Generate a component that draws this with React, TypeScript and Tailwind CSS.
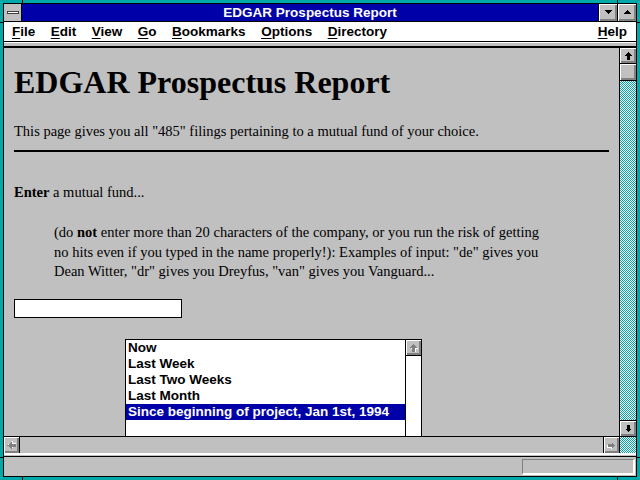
import React from 'react';

// Win 3.1 bevel for small gray buttons
const bevel = 'bg-[#c0c0c0] shadow-[inset_1px_1px_#fff,inset_-1px_-1px_#808080,inset_-2px_-2px_#808080]';
const dither = 'bg-[conic-gradient(#00a8a8_25%,#fff_0_50%,#00a8a8_0_75%,#fff_0)] bg-[length:2px_2px]';

// Thick pixel arrow pointing up; rotate for other directions
function Arrow({ dir = 0, gray }: { dir?: number; gray?: boolean }) {
  const pts = '3.5,0 7,4 5,4 5,8 2,8 2,4 0,4';
  return (
    <svg width="9" height="9" viewBox="-1 -0.5 9 9" shapeRendering="crispEdges" style={{ transform: `rotate(${dir}deg)` }}>
      {gray && <polygon points={pts} fill="#fff" transform="translate(1 1)" />}
      <polygon points={pts} fill={gray ? '#808080' : '#000'} />
    </svg>
  );
}

function Triangle({ up }: { up?: boolean }) {
  return (
    <svg width="8" height="5" viewBox="0 0 8 5" shapeRendering="crispEdges">
      <polygon points={up ? '4,0 8,4 0,4' : '0,0 8,0 4,4'} fill="#000" />
    </svg>
  );
}

function MenuItem({ k, rest }: { k: string; rest: string }) {
  return (
    <span>
      <span className="underline underline-offset-2">{k}</span>
      {rest}
    </span>
  );
}

export default function App() {
  const ranges = ['Now', 'Last Week', 'Last Two Weeks', 'Last Month', 'Since beginning of project, Jan 1st, 1994'];

  return (
    <div className="relative w-[640px] h-[480px] bg-[#00a8a8] p-[3px] font-['Liberation_Sans',Arial,sans-serif] text-[13.5px] font-bold">
      {/* resize-frame notches */}
      <div className="absolute left-[22px] top-0 w-px h-[3px] bg-black" />
      <div className="absolute left-[617px] top-0 w-px h-[3px] bg-black" />
      <div className="absolute left-[22px] bottom-0 w-px h-[3px] bg-black" />
      <div className="absolute left-[617px] bottom-0 w-px h-[3px] bg-black" />
      <div className="absolute left-0 top-[22px] w-[3px] h-px bg-black" />
      <div className="absolute right-0 top-[22px] w-[3px] h-px bg-black" />
      <div className="absolute left-0 top-[457px] w-[3px] h-px bg-black" />
      <div className="absolute right-0 top-[457px] w-[3px] h-px bg-black" />

      <div className="h-full flex flex-col border border-black bg-[#c0c0c0]">
        {/* Title bar */}
        <div className="h-[18px] shrink-0 flex border-b border-black bg-[#0000a8]">
          <div className="w-[18px] border-r border-black bg-[#c0c0c0] flex items-center justify-center">
            <div className="w-[12px] h-[3px] bg-white border border-[#404040]" />
          </div>
          <div className="flex-1 text-center text-white leading-[17px]">EDGAR Prospectus Report</div>
          <div className={`w-[19px] border-l border-black flex items-center justify-center ${bevel}`}>
            <Triangle />
          </div>
          <div className={`w-[19px] border-l border-black flex items-center justify-center ${bevel}`}>
            <Triangle up />
          </div>
        </div>

        {/* Menu bar */}
        <div className="h-[20px] shrink-0 flex items-center gap-[15.5px] pl-[8px] pr-[9px] bg-white border-b border-black leading-[19px] text-black">
          <MenuItem k="F" rest="ile" />
          <MenuItem k="E" rest="dit" />
          <MenuItem k="V" rest="iew" />
          <MenuItem k="G" rest="o" />
          <MenuItem k="B" rest="ookmarks" />
          <MenuItem k="O" rest="ptions" />
          <MenuItem k="D" rest="irectory" />
          <span className="ml-auto">
            <MenuItem k="H" rest="elp" />
          </span>
        </div>

        {/* Toolbar edge */}
        <div className="h-[6px] shrink-0 border-t border-white border-b-2 border-b-black bg-[#c0c0c0]" />

        {/* Document + vertical scrollbar */}
        <div className="flex-1 flex min-h-0">
          <div className="flex-1 overflow-hidden pl-[10px] pr-[10px] font-['Liberation_Serif','Times_New_Roman',serif] font-normal text-[14.5px] leading-[19px] text-black">
            <h1 className="mt-[18px] text-[32px] leading-[32px] font-bold">EDGAR Prospectus Report</h1>
            <p className="mt-[24px]">This page gives you all "485" filings pertaining to a mutual fund of your choice.</p>
            <hr className="mt-[9px] border-t-2 border-black" />
            <p className="mt-[31px]">
              <b>Enter</b> a mutual fund...
            </p>
            <blockquote className="mt-[21px] ml-[40px] mr-[64px] leading-[19.5px]">
              (do <b>not</b> enter more than 20 characters of the company, or you run the risk of getting no hits even if you
              typed in the name properly!): Examples of input: "de" gives you Dean Witter, "dr" gives you Dreyfus, "van" gives
              you Vanguard...
            </blockquote>
            <div className="mt-[17px] w-[168px] h-[19px] bg-white border border-black" />
            <div className="mt-[21px] ml-[111px] w-[297px] h-[120px] flex bg-white border border-black font-['Liberation_Sans',Arial,sans-serif] font-bold text-[13.5px] leading-[16px]">
              <div className="flex-1">
                {ranges.map((r, i) => (
                  <div key={r} className={`h-[16px] pl-[2px] whitespace-nowrap ${i === 4 ? 'bg-[#0000a8] text-white' : ''}`}>
                    {r}
                  </div>
                ))}
              </div>
              <div className="w-[16px] border-l border-black">
                <div className={`h-[16px] border-b border-black flex items-center justify-center ${bevel}`}>
                  <Arrow gray />
                </div>
              </div>
            </div>
          </div>

          <div className="w-[17px] flex flex-col border-l border-black">
            <div className={`h-[16px] border-b border-black flex items-center justify-center ${bevel}`}>
              <Arrow />
            </div>
            <div className={`h-[17px] border-b border-black ${bevel}`} />
            <div className={`flex-1 ${dither}`} />
            <div className={`h-[16px] border-t border-black flex items-center justify-center ${bevel}`}>
              <Arrow dir={180} />
            </div>
          </div>
        </div>

        {/* Horizontal scrollbar */}
        <div className="h-[17px] shrink-0 flex border-t border-black">
          <div className={`w-[16px] border-r border-black flex items-center justify-center ${bevel}`}>
            <Arrow dir={-90} gray />
          </div>
          <div className="flex-1 bg-[#c0c0c0]" />
          <div className={`w-[16px] border-l border-black flex items-center justify-center ${bevel}`}>
            <Arrow dir={90} gray />
          </div>
          <div className={`w-[17px] border-l border-black ${dither}`} />
        </div>

        {/* Status bar */}
        <div className="h-[4px] shrink-0 border-t-2 border-white border-b border-b-black bg-[#c0c0c0]" />
        <div className="h-[19px] shrink-0 flex items-center justify-end pr-[1px]">
          <div className="w-[113px] h-[16px] border-t border-l border-[#808080] border-b-2 border-r-2 border-b-white border-r-white" />
        </div>
      </div>
    </div>
  );
}
